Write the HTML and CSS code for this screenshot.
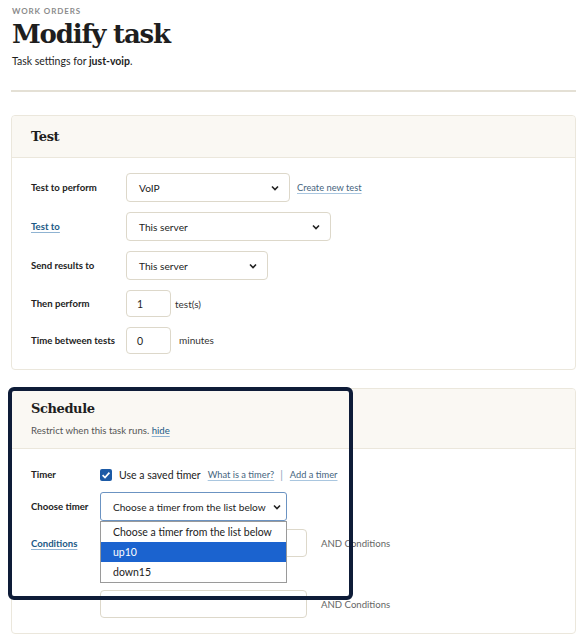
FILE: index.html
```html
<!DOCTYPE html>
<html lang="en">
<head>
    <meta charset="UTF-8">
    <title>Modify task</title>
    <link rel="stylesheet" href="styles.css">
</head>
<body>
    <div class="page">
        <header class="pageHead">
            <p class="crumb">Work orders</p>
            <h1>Modify task</h1>
            <p class="lead">Task settings for <b>just-voip</b>.</p>
        </header>

        <section class="card">
            <div class="cardHead"><h2>Test</h2></div>
            <div class="cardBody testForm">
                <div class="row">
                    <span class="label">Test to perform</span>
                    <div class="ctl">
                        <div class="select w164"><span>VoIP</span><svg viewBox="0 0 8 6" width="8" height="6"><path d="M1 1.5 4 4.5 7 1.5" fill="none" stroke="#222" stroke-width="1.6"/></svg></div>
                        <a href="#" class="soft">Create new test</a>
                    </div>
                </div>
                <div class="row">
                    <a href="#" class="label link">Test to</a>
                    <div class="ctl">
                        <div class="select w205"><span>This server</span><svg viewBox="0 0 8 6" width="8" height="6"><path d="M1 1.5 4 4.5 7 1.5" fill="none" stroke="#222" stroke-width="1.6"/></svg></div>
                    </div>
                </div>
                <div class="row">
                    <span class="label">Send results to</span>
                    <div class="ctl">
                        <div class="select w142"><span>This server</span><svg viewBox="0 0 8 6" width="8" height="6"><path d="M1 1.5 4 4.5 7 1.5" fill="none" stroke="#222" stroke-width="1.6"/></svg></div>
                    </div>
                </div>
                <div class="row">
                    <span class="label">Then perform</span>
                    <div class="ctl">
                        <div class="num">1</div>
                        <span class="unit">test(s)</span>
                    </div>
                </div>
                <div class="row">
                    <span class="label">Time between tests</span>
                    <div class="ctl">
                        <div class="num">0</div>
                        <span class="unit wide">minutes</span>
                    </div>
                </div>
            </div>
        </section>

        <section class="card schedule">
            <div class="cardHead tall">
                <h2>Schedule</h2>
                <p class="note">Restrict when this task runs. <a href="#" class="link">hide</a></p>
            </div>
            <div class="cardBody schedForm">
                <div class="row timer">
                    <span class="label">Timer</span>
                    <div class="ctl">
                        <span class="check"><svg viewBox="0 0 12 12" width="12" height="12"><path d="M2.6 6.2 5 8.5 9.4 3.6" fill="none" stroke="#fff" stroke-width="1.7"/></svg></span>
                        <span class="checkText">Use a saved timer</span>
                        <a href="#" class="soft">What is a timer?</a>
                        <span class="sep">|</span>
                        <a href="#" class="soft">Add a timer</a>
                    </div>
                </div>
                <div class="row">
                    <span class="label">Choose timer</span>
                    <div class="ctl dropWrap">
                        <div class="select open w187"><span>Choose a timer from the list below</span><svg viewBox="0 0 8 6" width="8" height="6"><path d="M1 1.5 4 4.5 7 1.5" fill="none" stroke="#222" stroke-width="1.6"/></svg></div>
                        <ul class="dropList">
                            <li>Choose a timer from the list below</li>
                            <li class="on">up10</li>
                            <li>down15</li>
                        </ul>
                    </div>
                </div>
                <div class="row">
                    <a href="#" class="label link">Conditions</a>
                    <div class="ctl">
                        <div class="text"></div>
                        <span class="unit and">AND Conditions</span>
                    </div>
                </div>
                <div class="row second">
                    <span class="label"></span>
                    <div class="ctl">
                        <div class="text"></div>
                        <span class="unit and">AND Conditions</span>
                    </div>
                </div>
            </div>
            <div class="mark"></div>
        </section>
    </div>
</body>
</html>
```

FILE: styles.css
```css
/* reset */
* {box-sizing: border-box;}
body, h1, h2, p, ul {margin: 0; padding: 0;}
li {list-style: none;}
a {text-decoration: none;}
body {
    font-family: Lato, "Noto Sans", sans-serif;
    font-size: 10.5px;
    color: #1e1e1e;
    background: #fff;
}

.page {padding: 6px 4px 0 11px;}

/* page header */
.pageHead {padding-left: 1px; padding-bottom: 21px; border-bottom: 2px solid #e4e0d5;}
.crumb {font-size: 8px; font-weight: 700; letter-spacing: 0.9px; text-transform: uppercase; color: #8b8b8b; line-height: 10px;}
.pageHead h1 {
    font-family: "DejaVu Serif", "Liberation Serif", serif;
    font-size: 26px; font-weight: 700; line-height: 34px;
    letter-spacing: -1.2px;
    margin-top: 1px;
}
.lead {margin-top: 3px; line-height: 15px;}
.lead b {font-weight: 700;}

/* cards */
.card {border: 1px solid #ebe7dc; border-radius: 4px; margin-top: 23px; background: #fff;}
.card.schedule {position: relative; margin-top: 18px;}
.cardHead {height: 42px; padding: 12px 19px 0; background: #faf8f3; border-bottom: 1px solid #ebe7dc; border-radius: 4px 4px 0 0;}
.cardHead.tall {height: 60px; padding-top: 11px;}
.cardHead h2 {font-family: "DejaVu Serif", "Liberation Serif", serif; font-size: 13px; font-weight: 700; line-height: 18px; letter-spacing: -0.4px;}
.note {margin-top: 6px; color: #555; font-size: 9.6px; line-height: 14px;}

.cardBody {padding: 15px 19px 15px; display: flex; flex-direction: column;}
.testForm {gap: 10px;}
.testForm .row {grid-template-columns: 95px 1fr;}
.schedForm {padding-top: 16px; gap: 8px;}
.schedForm .row {grid-template-columns: 69px 1fr;}
.schedForm .row.timer {min-height: 19px;}
.schedForm .row.second {margin-top: 25px;}

.row {display: grid; align-items: center;}
.label {font-size: 9.6px; font-weight: 700; color: #222; white-space: nowrap;}
.link {color: #1c5a86; text-decoration: underline; text-decoration-color: #8fb3d2; text-underline-offset: 2px;}
.ctl {display: flex; align-items: center; white-space: nowrap;}
.soft {font-size: 9.3px; color: #46657e; text-decoration: underline; text-decoration-color: #a9c6df; text-underline-offset: 2px; margin-left: 7px;}

/* controls */
.select {
    display: flex; align-items: center; justify-content: space-between;
    height: 29px; padding: 0 10px 0 12px;
    border: 1px solid #ddd8ca; border-radius: 4px; background: #fff;
    color: #222; font-size: 10.2px;
}
.select svg {flex: none;}
.w164 {width: 164px;}
.w205 {width: 205px;}
.w142 {width: 142px;}
.w187 {width: 187px;}
.select.open {border-color: #6b93c2; border-radius: 3px; padding: 0 5px 0 12px; font-size: 10.1px;}
.num {width: 45px; height: 27px; padding-left: 10px; display: flex; align-items: center; border: 1px solid #ddd8ca; border-radius: 4px;}
.unit {margin-left: 4px; color: #333; font-size: 10px;}
.unit.wide {margin-left: 8px; margin-top: -2px;}
.text {width: 207px; height: 28px; border: 1px solid #ddd8ca; border-radius: 4px;}
.unit.and {margin-left: 14px; font-size: 9.6px; color: #666;}

.check {width: 12px; height: 12px; border-radius: 2px; background: #1c5aa6; display: flex;}
.checkText {margin-left: 7px; color: #222;}
.sep {margin-left: 6px; color: #8aa4bb;}

/* open dropdown */
.dropWrap {position: relative;}
.dropList {
    position: absolute; top: 29px; left: 0; z-index: 2;
    width: 187px; background: #fff;
    border: 1px solid #9a9a9a;
}
.dropList li {height: 20px; line-height: 20px; padding-left: 12px; color: #222;}
.dropList li.on {background: #1b63cf; color: #fff;}

/* highlight frame */
.mark {
    position: absolute; top: -2px; left: -4px;
    width: 345px; height: 213px;
    border: 4px solid #0e1c38; border-radius: 6px;
    pointer-events: none;
}
```
